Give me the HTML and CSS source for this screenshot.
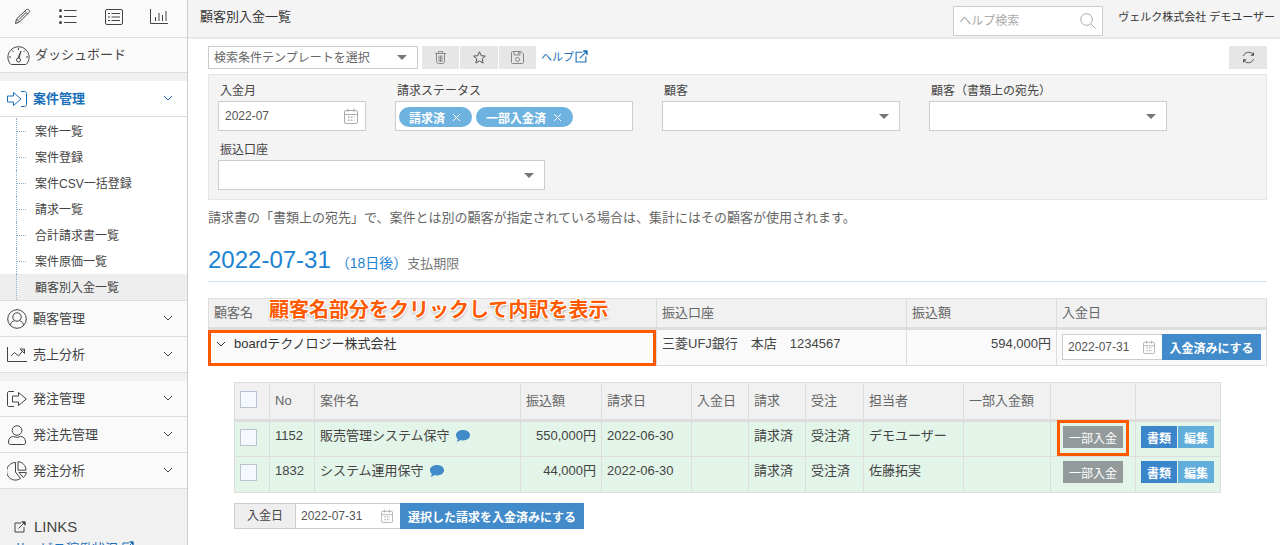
FILE: index.html
```html
<!DOCTYPE html>
<html lang="ja">
<head>
<meta charset="utf-8">
<title>顧客別入金一覧</title>
<link rel="stylesheet" href="styles.css">
</head>
<body>
<svg class="defs" aria-hidden="true">
  <symbol id="chevron" viewBox="0 0 10 6"><path d="M1 1l4 4 4-4"/></symbol>
  <symbol id="calendar" viewBox="0 0 14 16"><rect x=".5" y="2.500" width="13" height="13" rx="1.500"/><path d="M.5 6.500h13M4 .5v3.500M10 .5v3.500"/><path stroke-dasharray="1.500 1.500" stroke-width="1.500" d="M4 9h6.500M4 12.200h6.500"/></symbol>
  <symbol id="external" viewBox="0 0 12 12"><path d="M7 2H1v9h9V6M4.500 7.500l6-6M7.500 1H11v3.500"/><path class="solid" d="M7.500.5h4v4z"/></symbol>
  <symbol id="balloon" viewBox="0 0 14 12"><path d="M7 0c4 0 7 2.200 7 5.200s-3 5.200-7 5.200c-1 0-1.900-.1-2.700-.4C3.300 11 2 11.500.6 11.500c.8-.7 1.200-1.600 1.300-2.500C.7 8 0 6.700 0 5.200 0 2.200 3 0 7 0z"/></symbol>
</svg>
<div class="app">
  <aside class="sidebar">
    <div class="shortcuts">
      <button type="button" aria-label="作成"><svg class="line" width="17" height="17" viewBox="0 0 17 17"><path d="M1.500 15.500l1-4.500L12.300 1.700c.8-.7 1.700-.6 2.500.2s.9 1.700.2 2.500L5.500 14zM2.500 11L5.500 14M10.800 3.200l3 3M5 11.500l6.500-6.500"/></svg></button>
      <button type="button" aria-label="一覧"><svg class="line" width="18" height="15" viewBox="0 0 18 15"><path d="M5 1.500h12.500M5 7.500h12.500M5 13.500h12.500"/><circle class="solid" cx="1.500" cy="1.500" r="1.500"/><circle class="solid" cx="1.500" cy="7.500" r="1.500"/><circle class="solid" cx="1.500" cy="13.500" r="1.500"/></svg></button>
      <button type="button" aria-label="詳細一覧"><svg class="line" width="18" height="16" viewBox="0 0 18 16"><rect x=".5" y=".5" width="17" height="15" rx="1.500"/><path d="M6.500 4.500H15M6.500 8H15M6.500 11.500H15M3 4.500h2M3 8h2M3 11.500h2"/></svg></button>
      <button type="button" aria-label="グラフ"><svg class="line" width="18" height="15" viewBox="0 0 18 15"><path d="M.5 0v14.500H18M5.500 12V8M9 12V4M12.500 12V6M16 12V2"/></svg></button>
    </div>
    <nav>
      <a class="menu dashboard" href="#"><svg class="line" width="23" height="19" viewBox="0 0 23 19"><path d="M3 17.500C-.5 13 .5 6 5 3c4-3 9-3 13 0 4.500 3 5.500 10 2 14.500-.5.6-.8 1-1.500 1h-14c-.7 0-1-.4-1.500-1zM11.500 2v2M5 4.500l1.500 1.500M18 4.500L16.500 6M2 11h2M19 11h2M12 12l2-7-3 7"/><circle cx="11.500" cy="14" r="2"/></svg><span>ダッシュボード</span></a>
      <a class="menu open gap" href="#"><svg class="line" width="20" height="16" viewBox="0 0 20 16"><path d="M14 .5h3.500c1 0 2 .7 2 2v11c0 1.300-1 2-2 2H14M.5 5h6V1.500l7.500 6.500-7.500 6.500V11h-6z"/></svg><span>案件管理</span><svg class="line chev"><use href="#chevron"/></svg></a>
      <ul class="submenu">
        <li><a href="#">案件一覧</a></li>
        <li><a href="#">案件登録</a></li>
        <li><a href="#">案件CSV一括登録</a></li>
        <li><a href="#">請求一覧</a></li>
        <li><a href="#">合計請求書一覧</a></li>
        <li><a href="#">案件原価一覧</a></li>
        <li class="current"><a href="#">顧客別入金一覧</a></li>
      </ul>
      <a class="menu" href="#"><svg class="line" width="20" height="20" viewBox="0 0 20 20"><circle cx="10" cy="10" r="9.300"/><circle cx="10" cy="8" r="4.200"/><path d="M3.500 16.500c.2-3 1.500-4.200 4-4.700M16.500 16.500c-.2-3-1.500-4.200-4-4.700"/></svg><span>顧客管理</span><svg class="line chev"><use href="#chevron"/></svg></a>
      <a class="menu" href="#"><svg class="line" width="20" height="15" viewBox="0 0 20 15"><path d="M.5 0v14.500H20M4 9l3.500-3.500L11.500 9l5-6M13 2h4.500v4.500z"/></svg><span>売上分析</span><svg class="line chev"><use href="#chevron"/></svg></a>
      <a class="menu gap" href="#"><svg class="line" width="20" height="16" viewBox="0 0 20 16"><path d="M7 .5H2c-1 0-1.500.7-1.500 1.500v12c0 .8.500 1.500 1.500 1.500h5M5.500 5h6V1.500L19.300 8l-7.800 6.500V11h-6z"/></svg><span>発注管理</span><svg class="line chev"><use href="#chevron"/></svg></a>
      <a class="menu" href="#"><svg class="line" width="20" height="20" viewBox="0 0 20 20"><circle cx="10" cy="5.500" r="4.800"/><path d="M1.500 17c0-3.500 2-5.500 5-5.500 2 1 5 1 7 0 3 0 5 2 5 5.500 0 1.500-.5 2.500-2 2.500h-13c-1.500 0-2-1-2-2.500z"/></svg><span>発注先管理</span><svg class="line chev"><use href="#chevron"/></svg></a>
      <a class="menu" href="#"><svg class="line" width="20" height="20" viewBox="0 0 20 20"><path d="M8.500 1.500a8.800 8.800 0 1 0 5 16L8.500 11zM11 .7v8.500h8C19 4.500 15.500 1 11 .7zM12 11.500h7.300c-.3 2-1.300 3.800-3 5z"/></svg><span>発注分析</span><svg class="line chev"><use href="#chevron"/></svg></a>
    </nav>
    <section class="links">
      <h2><svg class="line" width="12" height="12"><use href="#external"/></svg>LINKS</h2>
      <a href="#">サービス稼働状況 <svg class="line" width="12" height="12"><use href="#external"/></svg></a>
    </section>
  </aside>

  <div class="page">
    <header class="topbar">
      <h1>顧客別入金一覧</h1>
      <label class="search"><input type="text" placeholder="ヘルプ検索" aria-label="ヘルプ検索"><svg class="line" width="16" height="16" viewBox="0 0 16 16"><circle cx="6.500" cy="6.500" r="5.800"/><path d="M10.800 10.800L15.500 15.500"/></svg></label>
      <span class="user">ヴェルク株式会社 デモユーザー</span>
    </header>

    <main>
      <div class="toolbar">
        <span class="select template"><select aria-label="検索条件テンプレート"><option>検索条件テンプレートを選択</option></select></span>
        <div class="tools">
          <button type="button" class="tool" aria-label="削除"><svg class="line" width="11" height="13" viewBox="0 0 11 13"><path d="M0 2.500h11M3.500 2.500v-2h4v2M1.500 2.500v8c0 1.300.7 2 2 2h4c1.300 0 2-.7 2-2v-8M4 4.500V11M5.500 4.500V11M7 4.500V11"/></svg></button>
          <button type="button" class="tool dark" aria-label="お気に入り"><svg class="line" width="13" height="13" viewBox="0 0 13 13"><path d="M6.500.8l1.700 3.900 4.200.4-3.200 2.800.9 4.200-3.600-2.200-3.600 2.200.9-4.200L.6 5.100l4.200-.4z"/></svg></button>
          <button type="button" class="tool" aria-label="保存"><svg class="line" width="13" height="13" viewBox="0 0 13 13"><path d="M.5 1.500c0-.6.400-1 1-1h8.500l2.500 2.500v8.500c0 .6-.4 1-1 1h-10c-.6 0-1-.4-1-1zM3 .5v3.500h6V.5M7.500 1v2"/><circle cx="6.500" cy="8.500" r="2"/></svg></button>
        </div>
        <a class="help" href="#">ヘルプ<svg class="line" width="13" height="13"><use href="#external"/></svg></a>
        <button type="button" class="tool dark refresh" aria-label="更新"><svg class="line" width="13" height="13" viewBox="0 0 13 13"><path d="M1.500 5C2.500 1 8 0 10.500 3M11.500 8C10.500 12 5 13 2.500 10"/><path class="solid" d="M12 1v3.700H8.300zM1 12V8.300h3.700z"/></svg></button>
      </div>

      <form class="filters">
        <div class="field month"><label for="month">入金月</label><span class="date"><input id="month" type="text" value="2022-07"><svg class="line"><use href="#calendar"/></svg></span></div>
        <div class="field"><span class="label">請求ステータス</span><div class="tags"><button type="button">請求済<svg class="line" width="9" height="9" viewBox="0 0 9 9"><path d="M1 1l7 7M8 1L1 8"/></svg></button><button type="button">一部入金済<svg class="line" width="9" height="9" viewBox="0 0 9 9"><path d="M1 1l7 7M8 1L1 8"/></svg></button></div></div>
        <div class="field"><label for="client">顧客</label><span class="select"><select id="client"><option></option></select></span></div>
        <div class="field"><label for="addressee">顧客（書類上の宛先）</label><span class="select"><select id="addressee"><option></option></select></span></div>
        <div class="field account"><label for="account">振込口座</label><span class="select"><select id="account"><option></option></select></span></div>
      </form>

      <p class="note">請求書の「書類上の宛先」で、案件とは別の顧客が指定されている場合は、集計にはその顧客が使用されます。</p>

      <h2 class="due"><span class="due-date">2022-07-31</span><span class="due-rest">（18日後）</span><small>支払期限</small></h2>

      <table class="grid summary">
        <colgroup><col><col class="w250"><col class="w150"><col class="w210"></colgroup>
        <thead><tr><th class="anchor">顧客名<strong class="callout">顧客名部分をクリックして内訳を表示</strong></th><th>振込口座</th><th>振込額</th><th>入金日</th></tr></thead>
        <tbody><tr>
          <td class="anchor"><button type="button" class="toggle"><svg class="line chev"><use href="#chevron"/></svg>boardテクノロジー株式会社</button><i class="frame"></i></td>
          <td>三菱UFJ銀行　本店　1234567</td>
          <td class="num">594,000円</td>
          <td class="pay"><div class="group"><span class="date"><input type="text" value="2022-07-31" aria-label="入金日"><svg class="line"><use href="#calendar"/></svg></span><button type="button" class="primary">入金済みにする</button></div></td>
        </tr></tbody>
      </table>

      <section class="detail">
        <table class="grid items">
          <colgroup><col class="w35"><col class="w45"><col><col class="w81"><col class="w90"><col class="w57"><col class="w57"><col class="w58"><col class="w100"><col class="w87"><col class="w85"><col class="w85"></colgroup>
          <thead><tr><th class="check"><input type="checkbox" aria-label="すべて選択"></th><th>No</th><th>案件名</th><th>振込額</th><th>請求日</th><th>入金日</th><th>請求</th><th>受注</th><th>担当者</th><th>一部入金額</th><th></th><th></th></tr></thead>
          <tbody>
            <tr><td class="check"><input type="checkbox" aria-label="1152を選択"></td><td>1152</td><td>販売管理システム保守<svg class="balloon"><use href="#balloon"/></svg></td><td class="num">550,000円</td><td>2022-06-30</td><td></td><td>請求済</td><td>受注済</td><td>デモユーザー</td><td></td><td class="anchor"><button type="button" class="mini gray">一部入金</button><i class="frame small"></i></td><td class="actions"><button type="button" class="mini blue">書類</button><button type="button" class="mini sky">編集</button></td></tr>
            <tr><td class="check"><input type="checkbox" aria-label="1832を選択"></td><td>1832</td><td>システム運用保守<svg class="balloon"><use href="#balloon"/></svg></td><td class="num">44,000円</td><td>2022-06-30</td><td></td><td>請求済</td><td>受注済</td><td>佐藤拓実</td><td></td><td><button type="button" class="mini gray">一部入金</button></td><td class="actions"><button type="button" class="mini blue">書類</button><button type="button" class="mini sky">編集</button></td></tr>
          </tbody>
        </table>
        <div class="group bulk"><label for="bulk-date">入金日</label><span class="date"><input id="bulk-date" type="text" value="2022-07-31"><svg class="line"><use href="#calendar"/></svg></span><button type="button" class="primary">選択した請求を入金済みにする</button></div>
      </section>
    </main>
  </div>
</div>
</body>
</html>
```

FILE: styles.css
```css
* { box-sizing: border-box; }

body, button, input, select {
  font-family: "Liberation Sans", "Noto Sans CJK JP", sans-serif;
}

body {
  margin: 0;
  font-size: 13px;
  line-height: 20px;
  color: #444;
  background: #fff;
}

a { color: inherit; text-decoration: none; }
h1, h2, p, ul { margin: 0; padding: 0; font-weight: normal; }
ul { list-style: none; }
button { margin: 0; padding: 0; border: 0; background: none; color: inherit; }
svg { flex: none; }

.defs { display: none; }
.line { fill: none; stroke: currentColor; stroke-width: 1; }
.solid { fill: currentColor; stroke: none; }
.chev { width: 10px; height: 6px; }

.app { display: flex; min-height: 100vh; }

/* Sidebar */
.sidebar {
  flex: none;
  width: 188px;
  height: 100vh;
  overflow: hidden;
  border-right: 1px solid #ccc;
  background: #f1f1f1;
}

.shortcuts {
  display: grid;
  grid-template-columns: repeat(4, 1fr);
  height: 38px;
  padding: 0 5px 4px 0;
  border-bottom: 1px solid #ddd;
  background: #fafafa;
}
.shortcuts button { display: grid; place-items: center; }

.menu {
  display: flex;
  align-items: center;
  gap: 6px;
  height: 36px;
  padding: 0 14px 0 7px;
  border-bottom: 1px solid #ddd;
  background: #fafafa;
}
.menu .chev { margin: 0 0 2px auto; }
.menu.dashboard { height: 35px; gap: 5px; }
.menu.gap { margin-top: 8px; }
.menu.open { color: #1a6fb8; font-weight: bold; background: #fff; }

.submenu {
  border-bottom: 1px solid #ddd;
  background: #fff;
  font-size: 12px;
}
.submenu li { height: 26px; padding-left: 16px; }
.submenu li:first-child { padding-top: 1px; height: 27px; }
.submenu a {
  display: flex;
  align-items: center;
  gap: 9px;
  height: 26px;
  padding-top: 1px;
  border-left: 1px dotted #8fb0cf;
}
.submenu a::before { content: ""; width: 9px; border-top: 1px dotted #8fb0cf; }
.submenu .current { background: #eee; }
.submenu .current a::before { border-color: transparent; }

.links { padding: 28px 14px 0; }
.links h2 { display: flex; align-items: center; gap: 8px; margin-bottom: 2px; font-size: 15px; line-height: 20px; }
.links a { color: #1a6fb8; font-size: 13px; white-space: nowrap; }

/* Top bar */
.page { flex: 1; min-width: 0; }

.topbar {
  display: flex;
  align-items: flex-start;
  height: 39px;
  padding: 6px 5px 0 12px;
  border-bottom: 2px solid #e8e8e8;
  background: #f4f4f4;
}
.topbar h1 { flex: 1; font-size: 13px; line-height: 22px; color: #333; }
.search {
  display: flex;
  align-items: center;
  width: 150px;
  height: 30px;
  padding: 0 6px 0 5px;
  border: 1px solid #ccc;
  background: #fff;
  color: #aaa;
}
.search input { flex: 1; min-width: 0; padding: 0; border: 0; outline: 0; font-size: 12px; }
.search input::placeholder { color: #aaa; }
.user { margin-left: 15px; font-size: 11px; line-height: 22px; color: #333; }

/* Form controls */
.select { display: block; position: relative; color: #777; }
.select::after {
  content: "";
  position: absolute;
  right: 11px;
  top: 50%;
  margin-top: -2px;
  border: solid transparent;
  border-width: 5px 5px 0;
  border-top-color: #777;
}
.select select {
  display: block;
  width: 100%;
  height: 30px;
  padding: 0 20px 0 5px;
  border: 1px solid #ccc;
  border-radius: 0;
  background: #fff;
  color: #666;
  font-size: 12px;
  appearance: none;
}
.date {
  display: flex;
  align-items: center;
  height: 30px;
  padding: 0 7px 0 6px;
  border: 1px solid #ccc;
  background: #fff;
}
.date input { flex: 1; width: 0; min-width: 0; padding: 0; border: 0; outline: 0; font-size: 12px; color: #555; background: none; }
.date svg { width: 14px; height: 16px; color: #aaa; }
.primary { background: #428bca; color: #fff; font-size: 12px; font-weight: bold; }

/* Toolbar */
main { padding: 7px 13px 0 20px; }

.toolbar { display: flex; height: 23px; color: #777; }
.template { width: 210px; }
.select.template::after { margin-top: -3px; }
.template select { height: 23px; }
.tools { display: flex; gap: 1px; margin: 0 5px 0 4px; }
.tool { display: grid; place-items: center; width: 37px; background: #e6e6e6; color: #888; }
.tool.dark { width: 38px; color: #555; }
.help { display: flex; align-items: center; gap: 1px; height: 21px; color: #1a6fb8; font-size: 11px; }
.refresh { margin-left: auto; }

/* Filters */
.filters {
  display: grid;
  grid-template-columns: 148px repeat(3, 238px);
  gap: 10px 29px;
  margin-top: 5px;
  padding: 7px 9px 9px;
  border: 1px solid #e5e5e5;
  background: #f4f4f4;
}
.month { margin-right: -1px; padding-right: 1px; }
.field label, .label { display: block; padding-left: 2px; font-size: 12px; line-height: 19px; }
.account { grid-column: 1 / 3; width: 327px; }
.tags { display: flex; align-items: center; gap: 4px; height: 30px; padding: 2px 3px 0; border: 1px solid #ccc; background: #fff; }
.tags button {
  display: flex;
  align-items: center;
  gap: 7px;
  height: 20px;
  padding: 0 11px 0 10px;
  border-radius: 10px;
  background: #6eb2e0;
  color: #fff;
  font-size: 12px;
  font-weight: bold;
}

.note { margin-top: 8px; color: #666; }

/* Due date heading */
.due {
  display: flex;
  align-items: baseline;
  margin-top: 18px;
  padding-bottom: 3px;
  border-bottom: 1px solid #d5e3ee;
  line-height: 28px;
}
.due-date { color: #1b83d1; font-size: 24px; }
.due-rest { margin-left: 5px; color: #1b83d1; font-size: 14px; }
.due small { color: #777; font-size: 13px; }

/* Tables */
.grid { width: 100%; border-collapse: collapse; table-layout: fixed; }
.grid th, .grid td { border: 1px solid #ddd; padding: 4px 5px; text-align: left; vertical-align: top; white-space: nowrap; }
.grid th { border-bottom-width: 3px; background: #f1f1f1; color: #666; font-weight: normal; }
.grid .num { text-align: right; }
.anchor { position: relative; }

.summary { margin-top: 16px; }
.summary td { height: 37px; background: #fafafa; }
.w250 { width: 250px; }
.w150 { width: 150px; }
.w210 { width: 210px; }
.toggle { display: flex; align-items: center; gap: 8px; padding-left: 2px; font-size: 13px; line-height: 20px; color: #333; }
.callout {
  position: absolute;
  left: 60px;
  top: -3px;
  color: #ff5a00;
  font-size: 20px;
  line-height: 28px;
  text-shadow: 1px 0 #fff, -1px 0 #fff, 0 1px #fff, 0 -1px #fff, 1px 1px #fff, -1px -1px #fff, 1px -1px #fff, -1px 1px #fff, 0 2px 3px #888;
}
.frame { position: absolute; inset: 0 0 -1px -1px; border: 3px solid #ff5a00; pointer-events: none; }
.small { inset: -2px 6px 0 6px; }

.group { display: flex; height: 26px; }
.group .date { width: 100px; height: 26px; padding: 0 7px 0 5px; border-right: 0; }
.group .date svg { width: 12px; height: 14px; }
.group .primary { padding: 0 8px; }
.pay .primary { flex: 1; padding: 0; }

.detail { padding: 16px 46px 0 26px; }
.items th { height: 38px; padding-top: 8px; }
.items td { height: 36px; background: #e3f4e8; }
.items .mini { margin: 0 auto; }
.items td.check { padding-top: 7px; }
.check input {
  display: block;
  width: 17px;
  height: 17px;
  margin: 0;
  border: 1px solid #b8c4d0;
  background: #f5f9fd;
  appearance: none;
}
.w35 { width: 35px; }
.w45 { width: 45px; }
.w57 { width: 57px; }
.w58 { width: 58px; }
.w81 { width: 81px; }
.w85 { width: 85px; }
.w87 { width: 87px; }
.w90 { width: 90px; }
.w100 { width: 100px; }
.balloon { width: 14px; height: 12px; margin-left: 6px; fill: #428bca; vertical-align: -2px; }
.mini { display: block; height: 22px; color: #fff; font-size: 12px; }
.gray { width: 60px; background: #939a9b; }
.grid .actions { font-size: 0; }
.actions .mini { display: inline-block; width: 36px; font-weight: bold; vertical-align: top; }
.actions .mini + .mini { margin-left: 1px; }
.blue { background: #3b86cb; }
.sky { background: #62aedb; }

.bulk { margin-top: 10px; }
.bulk label { width: 62px; border: 1px solid #ccc; background: #eee; text-align: center; line-height: 24px; font-size: 12px; }
.bulk .date { width: 104px; border-left: 0; }
```
